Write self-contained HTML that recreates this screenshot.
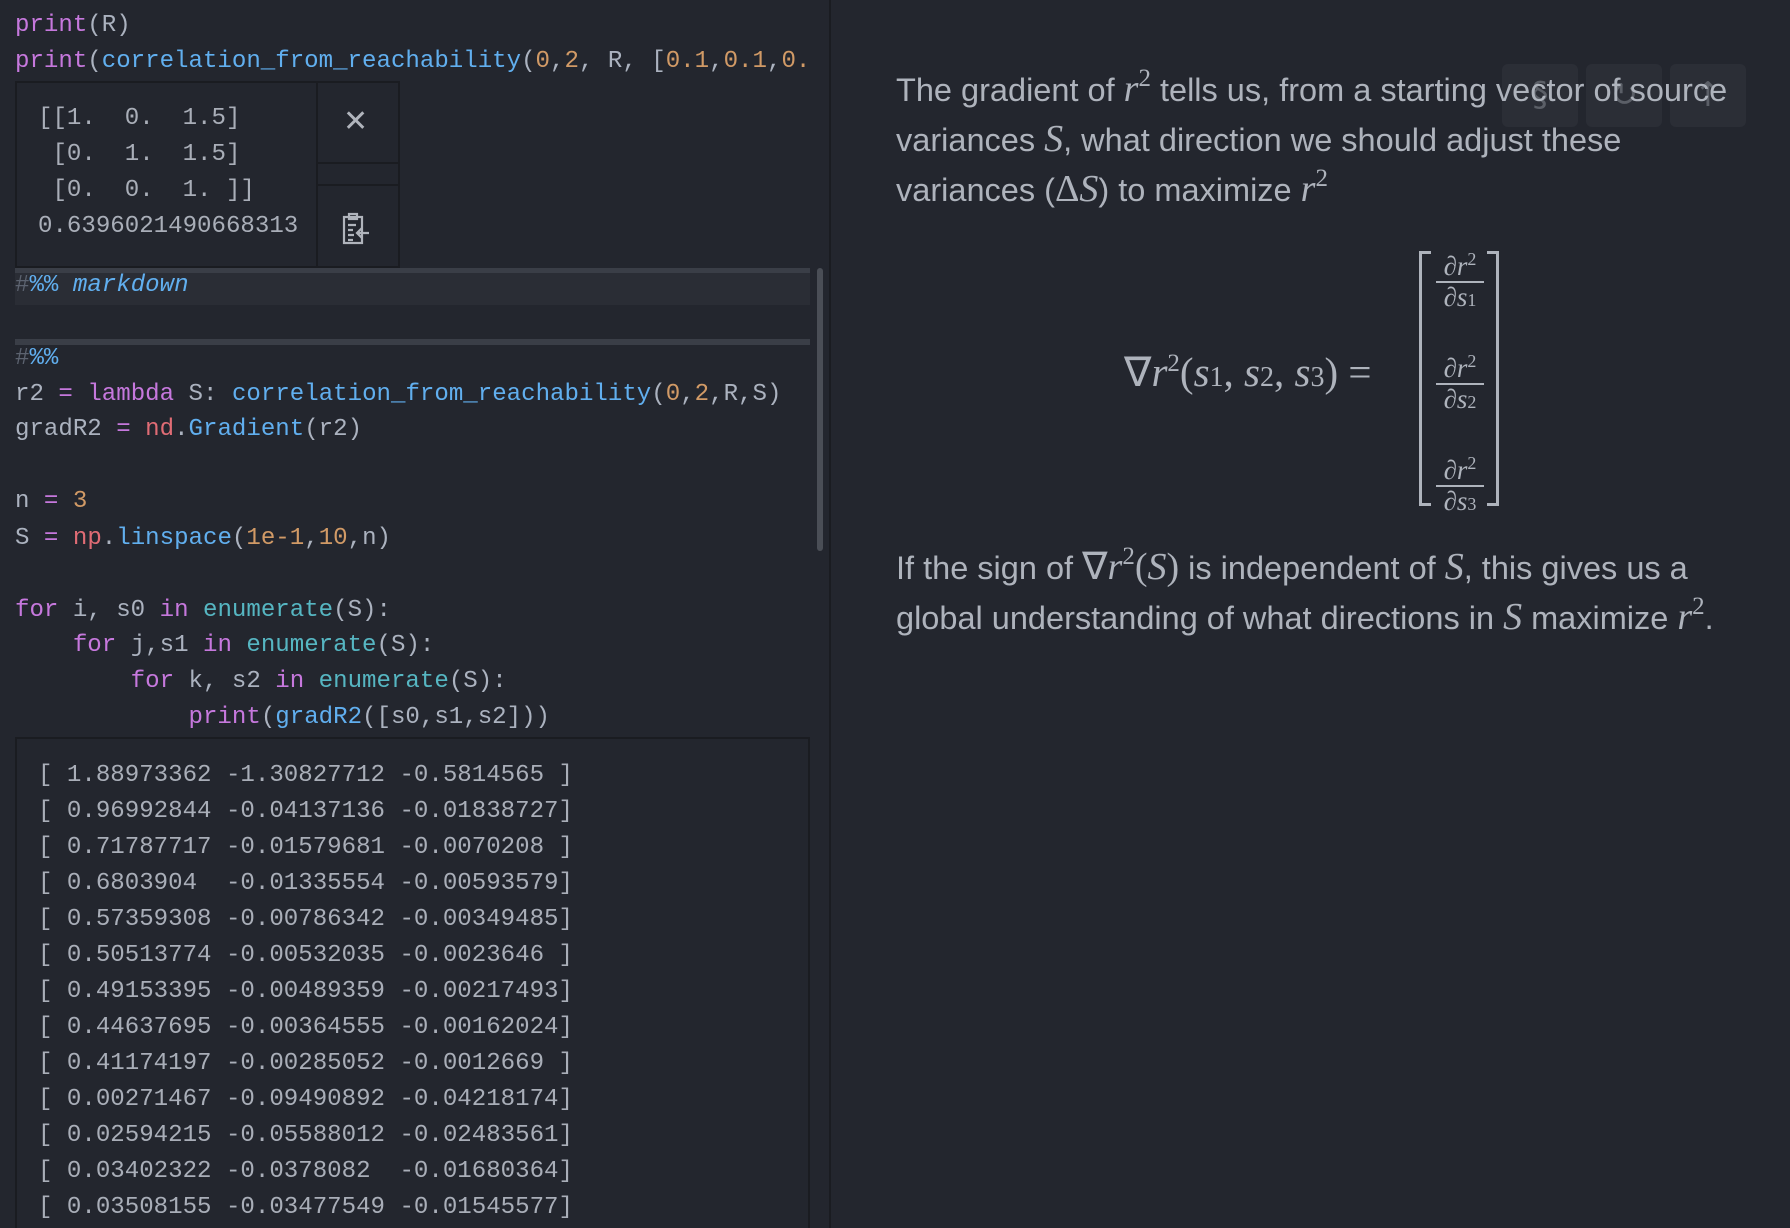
<!DOCTYPE html>
<html style="overflow:hidden;height:1228px"><head><meta charset="utf-8"><style>
*{margin:0;padding:0;box-sizing:border-box}
body{width:1790px;height:1228px;background:#23262e;overflow:hidden;position:relative;font-family:"Liberation Mono","DejaVu Sans Mono",monospace;color:#abb2bf}
.l{position:absolute;left:15px;font-size:24.1px;line-height:36px;height:36px;white-space:pre}
.o{position:absolute;left:38px;font-size:24.1px;line-height:36px;white-space:pre;color:#a9aeb8}
.k{color:#c678dd}.f{color:#61afef}.n{color:#d19a66}.c{color:#56b6c2}.r{color:#e06c75}.h{color:#5c6370}.b{color:#61afef}
.box{position:absolute;border:2px solid #1a1c21;background:#23262e}
.rt{position:absolute;left:896px;font-family:"Liberation Sans",sans-serif;font-size:32.5px;color:#aeb3bc;line-height:50px;white-space:nowrap}
.m{font-family:"Liberation Serif",serif;font-style:italic;font-size:38px}
.mu{font-family:"Liberation Serif",serif;font-size:38px}
sup{font-family:"Liberation Serif",serif;font-style:normal;font-size:25px;vertical-align:15px;line-height:0}
.btn{position:absolute;top:64px;width:76px;height:63px;background:rgba(48,52,60,0.6);border-radius:6px;color:rgba(150,155,165,0.45);text-align:center;font-family:"DejaVu Sans",sans-serif;font-size:34px;line-height:63px}
.fr{position:absolute;left:1436px;width:48px;text-align:center;font-family:"Liberation Serif",serif;color:#aeb3bc}
.fr .t{font-size:27px;line-height:29px;border-bottom:2px solid #aeb3bc}
.fr .d{font-size:27px;line-height:29px}
</style></head><body>
<div style="position:absolute;left:829px;top:0;width:2px;height:1228px;background:#1a1c21"></div>

<div class="l" style="top:8px"><span class="k">print</span>(R)</div>
<div class="l" style="top:44px"><span class="k">print</span>(<span class="f">correlation_from_reachability</span>(<span class="n">0</span>,<span class="n">2</span>, R, [<span class="n">0.1</span>,<span class="n">0.1</span>,<span class="n">0.</span></div>

<div class="box" style="left:15px;top:81px;width:385px;height:187px"></div>
<div style="position:absolute;left:316px;top:81px;width:2px;height:187px;background:#1a1c21"></div>
<div style="position:absolute;left:316px;top:162px;width:84px;height:2px;background:#1a1c21"></div>
<div style="position:absolute;left:316px;top:184px;width:84px;height:2px;background:#1a1c21"></div>
<div style="position:absolute;left:343px;top:104px;font-family:'DejaVu Sans',sans-serif;font-size:30px;font-weight:bold;color:#b0b4bc">✕</div>
<svg style="position:absolute;left:342px;top:212px" width="30" height="34" viewBox="0 0 30 34" fill="none" stroke="#b0b4bc" stroke-width="2.2"><rect x="2" y="5" width="18" height="26"/><rect x="7" y="2" width="8" height="5"/><path d="M6 13h8M6 18h5M6 23h6M6 28h5"/><path d="M27 21h-11M20 16l-5 5 5 5"/></svg>
<div class="o" style="top:101px">[[1.  0.  1.5]
 [0.  1.  1.5]
 [0.  0.  1. ]]
0.6396021490668313</div>

<div style="position:absolute;left:15px;top:268px;width:795px;height:37px;background:#2a2d35;border-top:5px solid #3a3e47"></div>
<div class="l" style="top:268px;font-style:italic"><span class="h" style="font-style:normal">#</span><span class="b" style="font-style:normal">%%</span> <span class="b">markdown</span></div>
<div style="position:absolute;left:15px;top:339px;width:795px;height:6px;background:#3a3e47"></div>
<div style="position:absolute;left:817px;top:268px;width:6px;height:283px;background:#4a4e56;border-radius:3px"></div>

<div class="l" style="top:341px"><span class="h">#</span><span class="b">%%</span></div>
<div class="l" style="top:377px">r2 <span class="k">=</span> <span class="k">lambda</span> S: <span class="f">correlation_from_reachability</span>(<span class="n">0</span>,<span class="n">2</span>,R,S)</div>
<div class="l" style="top:412px">gradR2 <span class="k">=</span> <span class="r">nd</span>.<span class="f">Gradient</span>(r2)</div>
<div class="l" style="top:484px">n <span class="k">=</span> <span class="n">3</span></div>
<div class="l" style="top:521px">S <span class="k">=</span> <span class="r">np</span>.<span class="f">linspace</span>(<span class="n">1e-1</span>,<span class="n">10</span>,n)</div>
<div class="l" style="top:593px"><span class="k">for</span> i, s0 <span class="k">in</span> <span class="c">enumerate</span>(S):</div>
<div class="l" style="top:628px">    <span class="k">for</span> j,s1 <span class="k">in</span> <span class="c">enumerate</span>(S):</div>
<div class="l" style="top:664px">        <span class="k">for</span> k, s2 <span class="k">in</span> <span class="c">enumerate</span>(S):</div>
<div class="l" style="top:700px">            <span class="k">print</span>(<span class="f">gradR2</span>([s0,s1,s2]))</div>

<div class="box" style="left:15px;top:737px;width:795px;height:491px;border-bottom:none"></div>
<div class="o" style="top:758px">[ 1.88973362 -1.30827712 -0.5814565 ]
[ 0.96992844 -0.04137136 -0.01838727]
[ 0.71787717 -0.01579681 -0.0070208 ]
[ 0.6803904  -0.01335554 -0.00593579]
[ 0.57359308 -0.00786342 -0.00349485]
[ 0.50513774 -0.00532035 -0.0023646 ]
[ 0.49153395 -0.00489359 -0.00217493]
[ 0.44637695 -0.00364555 -0.00162024]
[ 0.41174197 -0.00285052 -0.0012669 ]
[ 0.00271467 -0.09490892 -0.04218174]
[ 0.02594215 -0.05588012 -0.02483561]
[ 0.03402322 -0.0378082  -0.01680364]
[ 0.03508155 -0.03477549 -0.01545577]</div>

<div class="btn" style="left:1502px">§</div>
<div class="btn" style="left:1586px">↻</div>
<div class="btn" style="left:1670px">↑</div>

<div class="rt" style="top:64px">The gradient of <span class="m">r</span><sup>2</sup> tells us, from a starting vector of source</div>
<div class="rt" style="top:114px">variances <span class="m">S</span>, what direction we should adjust these</div>
<div class="rt" style="top:164px">variances (<span class="mu">Δ</span><span class="m">S</span>) to maximize <span class="m">r</span><sup>2</sup></div>

<div style="position:absolute;left:1124px;top:348px;font-family:'Liberation Serif',serif;font-size:41px;color:#aeb3bc;white-space:nowrap">∇<i>r</i><sup>2</sup>(<i>s</i><span style="font-size:28px">1</span>, <i>s</i><span style="font-size:28px">2</span>, <i>s</i><span style="font-size:28px">3</span>) =</div>
<div style="position:absolute;left:1419px;top:251px;width:12px;height:255px;border:3px solid #aeb3bc;border-right:none"></div>
<div style="position:absolute;left:1487px;top:251px;width:12px;height:255px;border:3px solid #aeb3bc;border-left:none"></div>
<div class="fr" style="top:245px"><div class="t">∂<i>r</i><span style="font-size:18px;vertical-align:10px">2</span></div><div class="d">∂<i>s</i><span style="font-size:18px">1</span></div></div>
<div class="fr" style="top:347px"><div class="t">∂<i>r</i><span style="font-size:18px;vertical-align:10px">2</span></div><div class="d">∂<i>s</i><span style="font-size:18px">2</span></div></div>
<div class="fr" style="top:449px"><div class="t">∂<i>r</i><span style="font-size:18px;vertical-align:10px">2</span></div><div class="d">∂<i>s</i><span style="font-size:18px">3</span></div></div>

<div class="rt" style="top:542px">If the sign of <span class="mu">∇</span><span class="m">r</span><sup>2</sup><span class="mu">(</span><span class="m">S</span><span class="mu">)</span> is independent of <span class="m">S</span>, this gives us a</div>
<div class="rt" style="top:592px">global understanding of what directions in <span class="m">S</span> maximize <span class="m">r</span><sup>2</sup>.</div>
</body></html>
